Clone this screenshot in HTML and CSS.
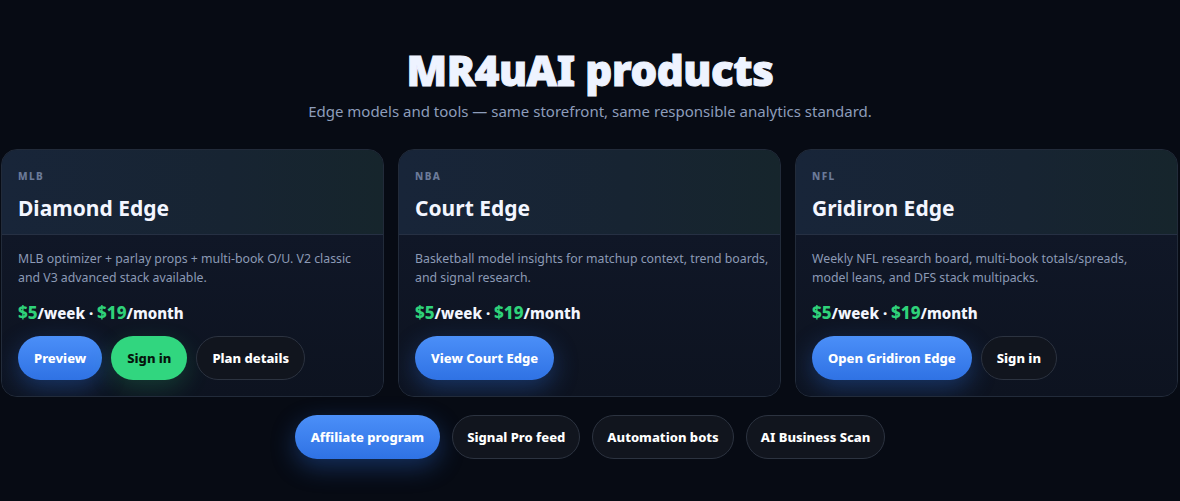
FILE: index.html
```html
<!DOCTYPE html>
<html lang="en">
<head>
<meta charset="utf-8">
<title>MR4uAI products</title>
<link rel="stylesheet" href="styles.css">
</head>
<body>
<main class="page">
  <header class="hero">
    <h1 class="hero-title">MR4uAI products</h1>
    <p class="hero-sub">Edge models and tools — same storefront, same responsible analytics standard.</p>
  </header>
  <section class="cards">
    <article class="card">
      <div class="card-head">
        <div class="card-label">MLB</div>
        <h2 class="card-title">Diamond Edge</h2>
      </div>
      <div class="card-body">
        <p class="card-desc">MLB optimizer + parlay props + multi-book O/U. V2 classic and V3 advanced stack available.</p>
        <p class="price"><span class="amt">$5</span>/week · <span class="amt">$19</span>/month</p>
        <div class="actions">
          <a class="btn btn-blue">Preview</a>
          <a class="btn btn-green">Sign in</a>
          <a class="btn btn-ghost">Plan details</a>
        </div>
      </div>
    </article>
    <article class="card">
      <div class="card-head">
        <div class="card-label">NBA</div>
        <h2 class="card-title">Court Edge</h2>
      </div>
      <div class="card-body">
        <p class="card-desc">Basketball model insights for matchup context, trend boards, and signal research.</p>
        <p class="price"><span class="amt">$5</span>/week · <span class="amt">$19</span>/month</p>
        <div class="actions">
          <a class="btn btn-blue">View Court Edge</a>
        </div>
      </div>
    </article>
    <article class="card">
      <div class="card-head">
        <div class="card-label">NFL</div>
        <h2 class="card-title">Gridiron Edge</h2>
      </div>
      <div class="card-body">
        <p class="card-desc">Weekly NFL research board, multi-book totals/spreads, model leans, and DFS stack multipacks.</p>
        <p class="price"><span class="amt">$5</span>/week · <span class="amt">$19</span>/month</p>
        <div class="actions">
          <a class="btn btn-blue">Open Gridiron Edge</a>
          <a class="btn btn-ghost">Sign in</a>
        </div>
      </div>
    </article>
  </section>
  <nav class="links">
    <a class="btn btn-blue">Affiliate program</a>
    <a class="btn btn-ghost">Signal Pro feed</a>
    <a class="btn btn-ghost">Automation bots</a>
    <a class="btn btn-ghost">AI Business Scan</a>
  </nav>
</main>
</body>
</html>
```
FILE: styles.css
```css
* { box-sizing: border-box; }
html, body {
  margin: 0;
  padding: 0;
  background: #070b14;
  color: #eef3ff;
  font-family: "Noto Sans", "Open Sans", sans-serif;
}
.page {
  width: 1180px;
  height: 501px;
  overflow: hidden;
  padding-top: 44px;
}
.hero { text-align: center; }
.hero-title {
  margin: 0;
  font-size: 42px;
  font-weight: 900;
  line-height: 52px;
  letter-spacing: -0.4px;
  -webkit-text-stroke: 1px #eef3ff;
  color: #eef3ff;
}
.hero-sub {
  margin: 4px 0 0;
  font-size: 15px;
  line-height: 22px;
  color: #8d9dbb;
}
.cards {
  display: grid;
  grid-template-columns: repeat(3, 383px);
  gap: 14px;
  margin-top: 27px;
  padding-left: 1px;
}
.card {
  height: 248px;
  border: 1px solid #222b3a;
  border-radius: 16px;
  overflow: hidden;
  background: #0e1421;
  display: flex;
  flex-direction: column;
}
.card-head {
  height: 85px;
  padding: 19px 16px 0;
  background: linear-gradient(90deg, #182539 0%, #172432 60%, #16252c 100%);
  border-bottom: 1px solid #263043;
}
.card-label {
  font-size: 10px;
  font-weight: 800;
  letter-spacing: 1.4px;
  color: #6b7a98;
  line-height: 14px;
}
.card-title {
  margin: 11px 0 0;
  font-size: 21px;
  font-weight: 700;
  line-height: 28px;
  color: #f3f6ff;
}
.card-body {
  flex: 1;
  padding: 14px 10px 0 16px;
  background: linear-gradient(180deg, #101727 0%, #0d1320 100%);
}
.card-desc {
  margin: 0;
  font-size: 12.3px;
  line-height: 19px;
  color: #8c9ab5;
}
.price {
  margin: 16px 0 0;
  font-size: 15px;
  font-weight: 800;
  line-height: 20px;
  color: #f3f6ff;
}
.amt { color: #2fd27a; font-size: 17px; }
.actions {
  display: flex;
  gap: 9px;
  margin-top: 13px;
}
.btn {
  display: inline-flex;
  align-items: center;
  justify-content: center;
  height: 44px;
  padding: 0 16px;
  border-radius: 22px;
  font-size: 13px;
  font-weight: 800;
  color: #ffffff;
  white-space: nowrap;
  cursor: pointer;
}
.btn-blue {
  background: linear-gradient(180deg, #4b8ff8 0%, #2f72e4 100%);
  box-shadow: 0 8px 24px rgba(47, 114, 228, 0.35);
}
.btn-green {
  background: #31d67f;
  color: #06140c;
  box-shadow: 0 8px 24px rgba(49, 214, 127, 0.2);
}
.btn-ghost {
  background: #11151e;
  border: 1px solid #2c3340;
  padding: 0 15px;
}
.links .btn-ghost { padding: 0 14px; }
.links {
  display: flex;
  justify-content: center;
  gap: 12px;
  margin-top: 18px;
}
```
